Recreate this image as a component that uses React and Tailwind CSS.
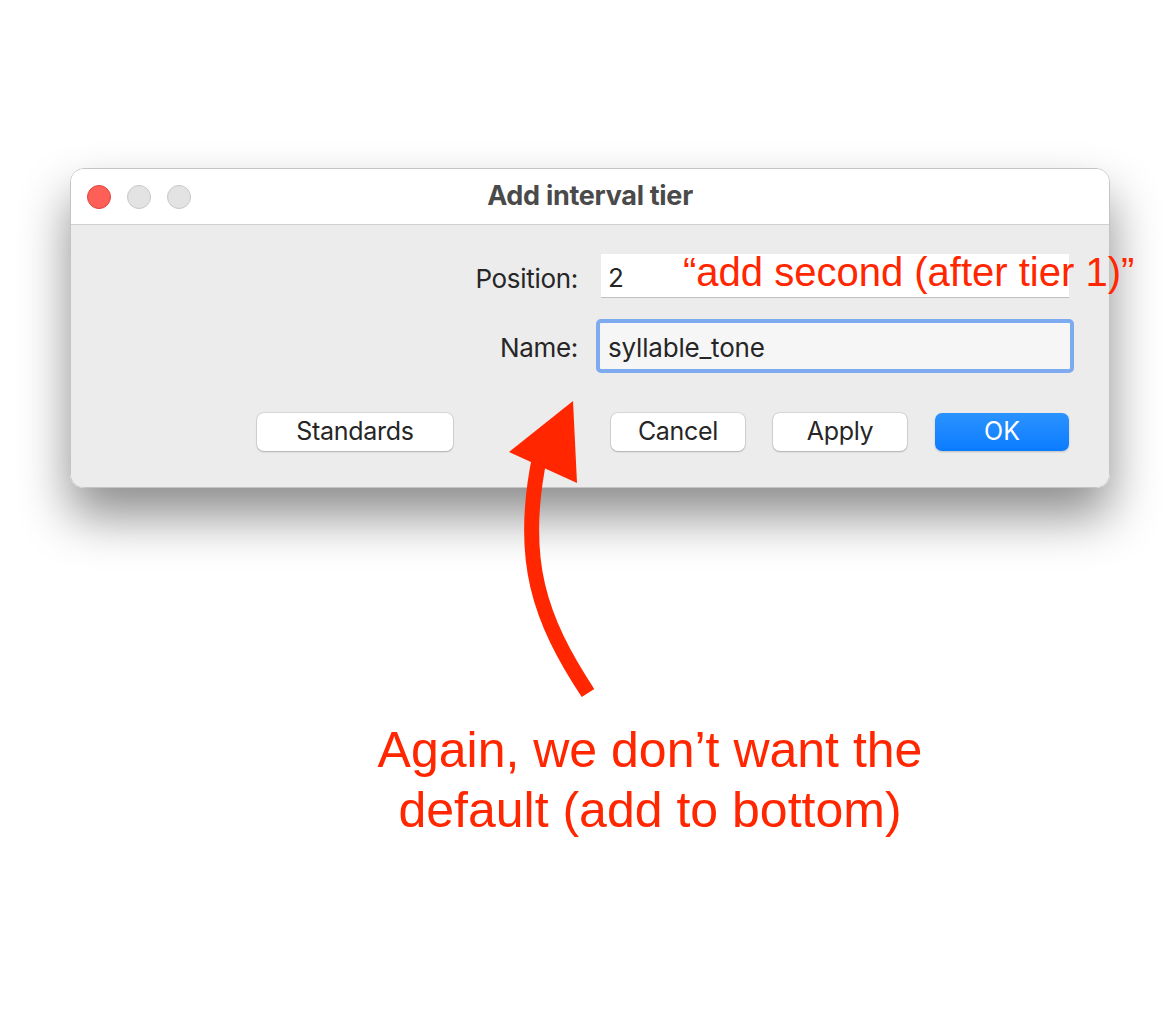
import React from 'react'

const ui = { fontFamily: 'Inter, "Noto Sans", sans-serif' }
const helv = { fontFamily: '"Liberation Sans", Arial, sans-serif' }

const Btn = ({ children, className = '' }) => (
  <button
    className={`h-[38px] rounded-[7px] bg-white text-[25px] tracking-[-0.3px] text-[#262626] shadow-[0_0_0_1px_rgba(0,0,0,0.08),0_1px_2px_rgba(0,0,0,0.2)] ${className}`}
    style={ui}
  >
    {children}
  </button>
)

export default function App() {
  return (
    <div className="relative w-[1170px] h-[1022px] bg-white overflow-hidden">
      <div className="pt-[168px] px-[70px]">
        <div className="w-[1040px] h-[320px] rounded-[14px] overflow-hidden border border-[#c4c4c4] shadow-[0_28px_50px_rgba(0,0,0,0.45)] flex flex-col">
          {/* title bar */}
          <div className="relative h-[56px] bg-white border-b border-[#d0d0d0] flex items-center justify-center">
            <div className="absolute left-[16px] top-[16px] flex gap-[16px]">
              <span className="w-[24px] h-[24px] rounded-full bg-[#fe5f57] border border-[#e0443e]" />
              <span className="w-[24px] h-[24px] rounded-full bg-[#e3e3e3] border border-[#c8c8c8]" />
              <span className="w-[24px] h-[24px] rounded-full bg-[#e3e3e3] border border-[#c8c8c8]" />
            </div>
            <span className="text-[27px] tracking-[-0.3px] font-bold text-[#4a4a4a]" style={ui}>Add interval tier</span>
          </div>
          {/* body */}
          <div className="flex-1 bg-[#ececec] flex flex-col">
            <div className="flex items-center mt-[29px]">
              <span className="w-[507px] pt-[4px] text-right text-[26px] tracking-[-0.3px] text-[#262626]" style={ui}>Position:</span>
              <div className="ml-[23px] w-[468px] h-[44px] bg-white border-b border-[#c0c0c0] flex items-center pt-[4px] pl-[7px] text-[26px] text-[#262626]" style={ui}>2</div>
            </div>
            <div className="flex items-center mt-[21px]">
              <span className="w-[507px] pt-[3px] text-right text-[26px] tracking-[-0.3px] text-[#262626]" style={ui}>Name:</span>
              <div className="ml-[18px] w-[478px] h-[54px] rounded-[5px] border-[4px] border-[#7eaaef] bg-[#f6f6f6] flex items-center pt-[3px] pl-[8px] text-[26px] tracking-[-0.2px] text-[#262626]" style={ui}>syllable_tone</div>
            </div>
            <div className="flex items-center mt-[40px]">
              <Btn className="ml-[186px] w-[196px]">Standards</Btn>
              <Btn className="ml-[158px] w-[134px]">Cancel</Btn>
              <Btn className="ml-[28px] w-[134px]">Apply</Btn>
              <button
                className="ml-[28px] w-[134px] h-[38px] rounded-[7px] bg-gradient-to-b from-[#2a93ff] to-[#0a7bff] text-white text-[25px] shadow-[0_1px_2px_rgba(0,0,0,0.2)]"
                style={ui}
              >
                OK
              </button>
            </div>
          </div>
        </div>
      </div>

      <div className="mt-[232px] text-center text-[#ff2600] text-[50px] leading-[60px] pl-[130px]" style={helv}>
        <div>Again, we don’t want the</div>
        <div>default (add to bottom)</div>
      </div>

      {/* annotation overlay */}
      <div className="absolute left-[683px] top-[247px] text-[#ff2600] text-[40px] leading-[50px] whitespace-nowrap" style={helv}>
        “add second (after tier 1)”
      </div>

      <svg className="absolute left-0 top-0" width="1170" height="1022" viewBox="0 0 1170 1022">
        <path d="M588 693 C 540 620, 518 560, 540 455" fill="none" stroke="#ff2600" strokeWidth="15" />
        <polygon points="573,401 509,452 577,483" fill="#ff2600" />
      </svg>
    </div>
  )
}
